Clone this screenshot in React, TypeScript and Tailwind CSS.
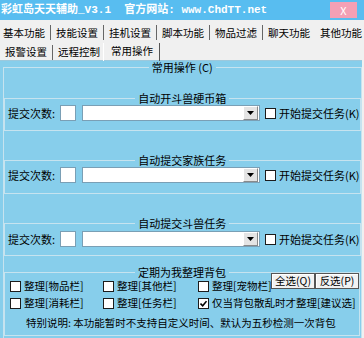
import type { ReactNode } from 'react'

const cjk = "font-['Noto_Sans_CJK_SC',sans-serif]"

function Sep() {
  return <span className="mx-[5px] h-[15px] w-px shrink-0 bg-[#666]" />
}

function Check({ checked }: { checked?: boolean }) {
  return (
    <span className="flex h-[11px] w-[11px] shrink-0 items-center justify-center border border-[#1c1c1c] bg-white">
      {checked && (
        <svg width="7" height="7" viewBox="0 0 7 7">
          <path d="M0.5 3.5 L2.7 5.7 L6.5 1.2" stroke="#000" strokeWidth="1.6" fill="none" />
        </svg>
      )}
    </span>
  )
}

function GroupBox({ title, className, children }: { title: string; className: string; children: ReactNode }) {
  return (
    <fieldset className={`border border-[#c6e3ef] ${className}`}>
      <legend className="mx-auto px-[3px] text-[11px] leading-[14px] text-black">{title}</legend>
      {children}
    </fieldset>
  )
}

function SubmitRow() {
  return (
    <div className="flex h-[16px] items-center pl-[3px] text-[11px] leading-[14px]">
      <span className="w-[52px] shrink-0">提交次数:</span>
      <span className="h-[16px] w-[16px] shrink-0 border border-[#7a9fb5] bg-white" />
      <div className="ml-[6px] flex h-[16px] w-[178px] shrink-0 items-center justify-end border border-[#7a9fb5] bg-white pr-px">
        <span className="flex h-[14px] w-[15px] items-center justify-center border border-l-white border-t-white border-r-[#8a8a8a] border-b-[#8a8a8a] bg-[#e4e4e4]">
          <svg width="7" height="4" viewBox="0 0 7 4">
            <path d="M0 0 H7 L3.5 4 Z" fill="#000" />
          </svg>
        </span>
      </div>
      <span className="ml-[5px]">
        <Check />
      </span>
      <span className="ml-[3px] shrink-0">开始提交任务(K)</span>
    </div>
  )
}

function Btn({ label }: { label: string }) {
  return (
    <span className="flex h-[16px] w-[44px] shrink-0 items-center justify-center border border-[#555] bg-[#f2f2f2] text-[10.5px] leading-[14px] shadow-[inset_1px_1px_0_#fff]">
      {label}
    </span>
  )
}

function Item({ label, checked, w }: { label: string; checked?: boolean; w: string }) {
  return (
    <label className={`flex shrink-0 items-center gap-[3px] ${w}`}>
      <Check checked={checked} />
      <span>{label}</span>
    </label>
  )
}

export default function App() {
  return (
    <div className={`h-[338px] w-[364px] overflow-hidden whitespace-nowrap bg-[#f0f0f0] text-black ${cjk}`}>
      {/* title bar */}
      <div className="flex h-[20px] items-center bg-[#58bdf0]">
        <span className="whitespace-pre pl-px font-['Liberation_Mono','Noto_Sans_CJK_SC',monospace] text-[11px] font-bold text-white">
          彩虹岛天天辅助_V3.1  官方网站: www.ChdTT.net
        </span>
        <span className="ml-auto mr-[7px] flex h-[16px] w-[27px] shrink-0 items-center justify-center bg-[#f3a0b5] text-[11px] text-white">
          X
        </span>
      </div>

      {/* tabs */}
      <div className="flex h-[21px] items-center pl-[3px] pt-[4px] text-[10.5px] leading-[14px]">
        <span>基本功能</span>
        <Sep />
        <span>技能设置</span>
        <Sep />
        <span>挂机设置</span>
        <Sep />
        <span>脚本功能</span>
        <Sep />
        <span>物品过滤</span>
        <Sep />
        <span>聊天功能</span>
        <span className="ml-[10px]">其他功能</span>
      </div>
      <div className="flex h-[19px] items-center pl-[5px] pt-[3px] text-[10.5px] leading-[14px]">
        <span>报警设置</span>
        <Sep />
        <span>远程控制</span>
        <span className="ml-[3px] flex h-[18px] items-start border-l border-r border-l-white border-r-[#555] pl-[7px] pr-[6px] pt-[1px]">
          常用操作
        </span>
      </div>

      {/* panel */}
      <div className="h-[278px] w-[362px] border-t border-[#9cc8dc] bg-[#87ceeb] px-[3px]">
        <fieldset className="h-[280px] w-[358px] border border-[#c6e3ef]">
          <legend className="mx-auto px-[3px] text-[11px] leading-[12px]">常用操作 (C)</legend>

          <GroupBox title="自动开斗兽硬币箱" className="mt-[18px] h-[40px] w-[355px]">
            <SubmitRow />
          </GroupBox>

          <GroupBox title="自动提交家族任务" className="mt-[22px] h-[41px] w-[355px]">
            <SubmitRow />
          </GroupBox>

          <GroupBox title="自动提交斗兽任务" className="mt-[22px] h-[40px] w-[355px]">
            <div className="pt-[1px]">
              <SubmitRow />
            </div>
          </GroupBox>

          <GroupBox title="定期为我整理背包" className="mt-[9px] h-[71px] w-[355px]">
            <div className="pl-[5px] text-[10.5px] leading-[14px]">
              <div className="flex h-[14px] items-start">
                <Item label="整理[物品栏]" w="w-[93px]" />
                <Item label="整理[其他栏]" w="w-[95px]" />
                <Item label="整理[宠物栏]" w="w-[73px]" />
                <div className="-mt-[6px] flex">
                  <Btn label="全选(Q)" />
                  <Btn label="反选(P)" />
                </div>
              </div>
              <div className="mt-[3px] flex h-[14px] items-center">
                <Item label="整理[消耗栏]" w="w-[93px]" />
                <Item label="整理[任务栏]" w="w-[95px]" />
                <Item label="仅当背包散乱时才整理[建议选]" checked w="" />
              </div>
              <div className="mt-[6px] pl-[16px]">特别说明: 本功能暂时不支持自定义时间、默认为五秒检测一次背包</div>
            </div>
          </GroupBox>
        </fieldset>
      </div>
    </div>
  )
}
